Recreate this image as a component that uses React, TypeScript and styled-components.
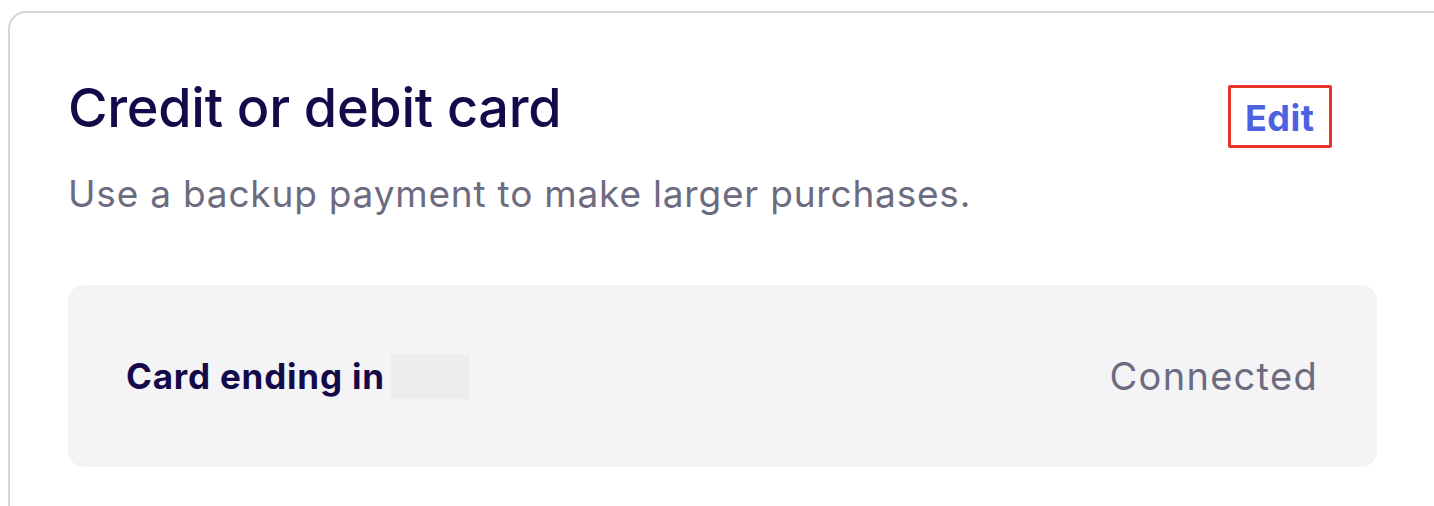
import React from "react";
import styled, { createGlobalStyle } from "styled-components";

const Global = createGlobalStyle`
  html, body { margin: 0; padding: 0; background: #ffffff; }
  body { font-family: Inter, "Noto Sans", sans-serif; overflow: hidden; }
`;

const Page = styled.div`
  padding: 11px 0 0 8px;
  width: 1434px;
  height: 506px;
  box-sizing: border-box;
  overflow: hidden;
`;

const Card = styled.section`
  width: 1480px;
  height: 560px;
  box-sizing: border-box;
  border: 2px solid #d6d6da;
  border-radius: 18px;
  padding: 63px 0 0 58px;
`;

const Inner = styled.div`
  width: 1309px;
`;

const Header = styled.div`
  display: flex;
  justify-content: space-between;
  align-items: flex-start;
`;

const Title = styled.h2`
  margin: 0;
  font-size: 54px;
  font-weight: 500;
  color: #140a4a;
  letter-spacing: -0.3px;
  line-height: 64px;
`;

const EditBox = styled.div`
  margin: 9px 45px 0 0;
  width: 104px;
  height: 63px;
  box-sizing: border-box;
  border: 3px solid #e5332a;
  border-radius: 2px;
  padding: 8px 0 0 14px;
  display: flex;
`;

const EditLink = styled.a`
  font-size: 36px;
  font-weight: 700;
  color: #4d62e0;
  line-height: 44px;
  letter-spacing: 0.5px;
  text-decoration: none;
`;

const Subtitle = styled.p`
  margin: 24px 0 0 0;
  font-size: 37px;
  color: #6c6b80;
  line-height: 44px;
  letter-spacing: 0.8px;
`;

const Panel = styled.div`
  margin-top: 69px;
  background: #f4f4f6;
  border-radius: 16px;
  height: 182px;
  display: flex;
  align-items: center;
  justify-content: space-between;
  padding: 0 59px 0 58px;
  box-sizing: border-box;
`;

const Label = styled.div`
  display: flex;
  align-items: center;
  gap: 6px;
  font-size: 35px;
  font-weight: 700;
  color: #140a4a;
  letter-spacing: 0.8px;
`;

const Redacted = styled.span`
  display: inline-block;
  width: 78px;
  height: 45px;
  background: #ededed;
`;

const Status = styled.div`
  font-size: 38px;
  color: #6c6b80;
  letter-spacing: 1.3px;
`;

export default function App() {
  return (
    <>
      <Global />
      <Page>
        <Card>
          <Inner>
            <Header>
              <Title>Credit or debit card</Title>
              <EditBox>
                <EditLink href="#">Edit</EditLink>
              </EditBox>
            </Header>
            <Subtitle>Use a backup payment to make larger purchases.</Subtitle>
            <Panel>
              <Label>
                <span>Card ending in</span>
                <Redacted />
              </Label>
              <Status>Connected</Status>
            </Panel>
          </Inner>
        </Card>
      </Page>
    </>
  );
}
